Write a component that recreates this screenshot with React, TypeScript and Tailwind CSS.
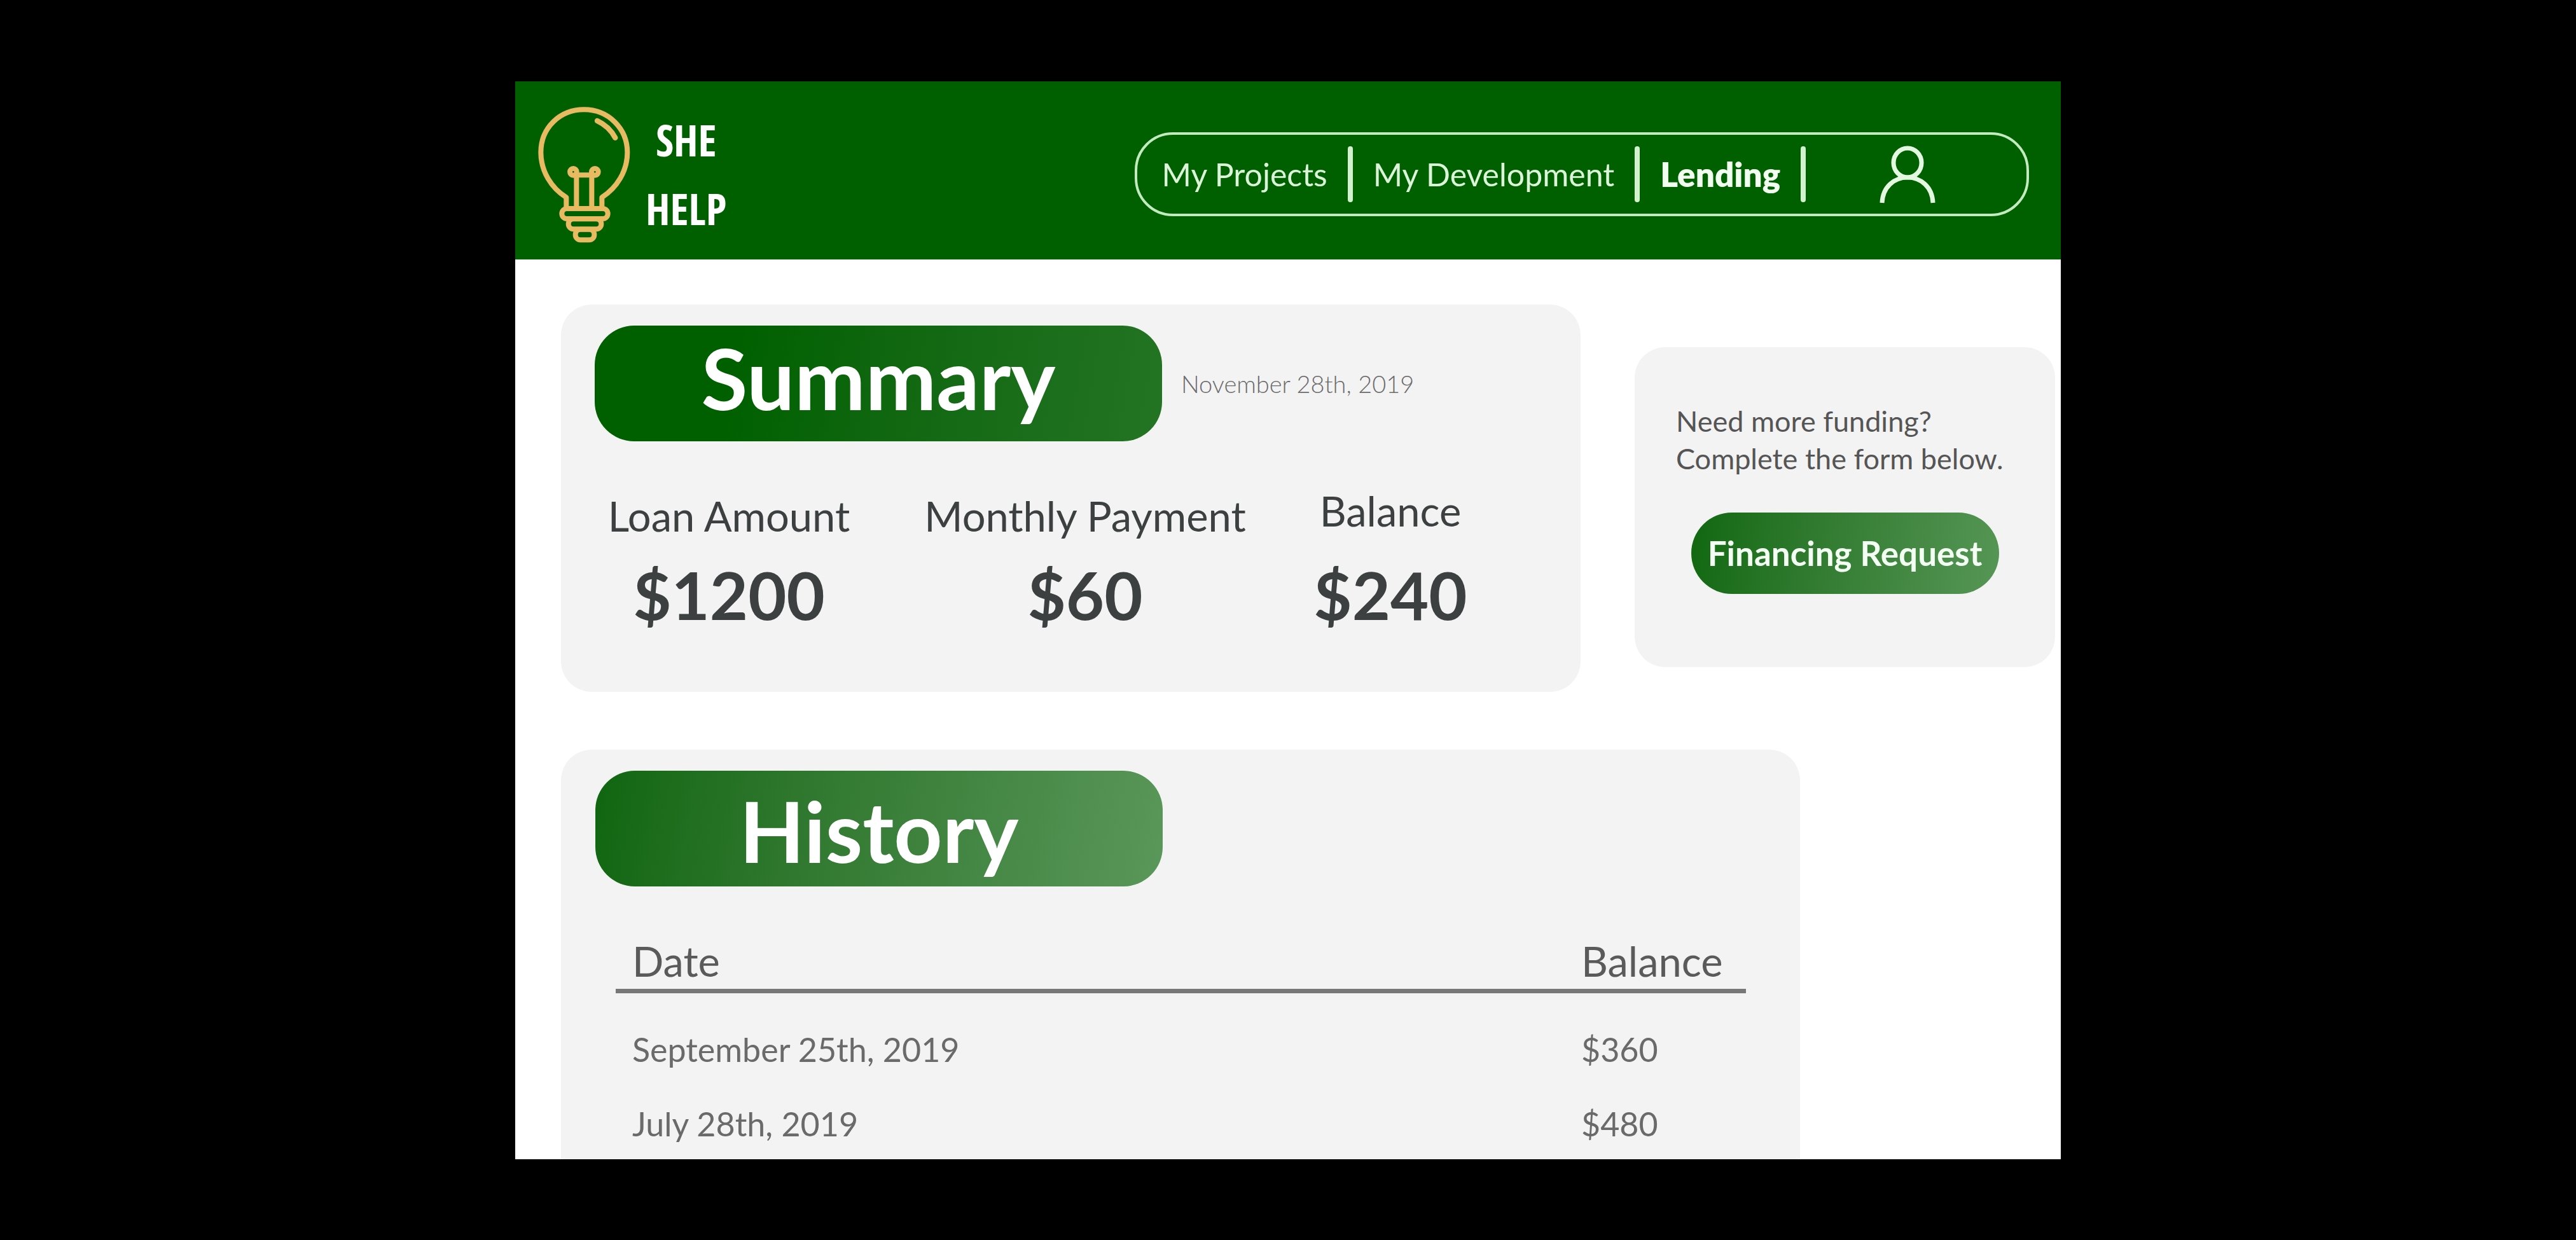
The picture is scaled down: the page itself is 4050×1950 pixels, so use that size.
import React from "react";

const stats = [
  { label: "Loan Amount", value: "$1200", gap: "gap-5" },
  { label: "Monthly Payment", value: "$60", gap: "gap-5" },
  { label: "Balance", value: "$240", gap: "gap-7" },
];

const history = [
  { date: "September 25th, 2019", balance: "$360" },
  { date: "July 28th, 2019", balance: "$480" },
];

function Bulb() {
  return (
    <svg
      viewBox="140 146 435 642"
      className="h-[214px] w-[145px] shrink-0"
      fill="none"
      stroke="#e8ba61"
      strokeWidth="24"
      strokeLinejoin="round"
      aria-hidden="true"
    >
      <path d="M273 622V573C203 530 153 450 153 361C153 244 243 159 357 159C471 159 561 248 561 361C561 450 511 528 441 573V622" />
      <path d="M419 212Q475 238 504 292" strokeLinecap="round" strokeWidth="25" />
      <circle cx="306" cy="453" r="16" />
      <circle cx="408" cy="453" r="16" />
      <path d="M321 622V460M393 622V460M321 468H393" />
      <rect x="252" y="626" width="217" height="48" rx="24" />
      <rect x="283" y="675" width="155" height="48" rx="24" />
      <rect x="316" y="724" width="89" height="50" rx="24" />
    </svg>
  );
}

function Person() {
  return (
    <svg viewBox="0 0 96 92" className="h-[92px] w-[96px]" fill="none" stroke="#e4f7e1" strokeWidth="7" aria-hidden="true">
      <ellipse cx="48" cy="28" rx="22" ry="23" />
      <path d="M8 91C9 66 27 51 48 51C69 51 87 66 88 91" />
    </svg>
  );
}

function Divider() {
  return <span className="h-[88px] w-2 shrink-0 rounded-sm bg-[#d3f0cf]" />;
}

export default function App() {
  return (
    <div className="flex min-h-screen flex-col bg-black pt-32 pb-[127px] font-['Lato',sans-serif]">
      <div className="mx-auto flex w-[60%] flex-1 flex-col overflow-hidden bg-white">
        <header className="flex items-start bg-[#006000] pr-[50px] pl-9">
          <a href="#home" className="flex gap-6 text-white">
            <span className="pt-10">
              <Bulb />
            </span>
            <span className="flex flex-col pt-[38px] pb-[26px] text-center font-['Open_Sans_Condensed','Roboto_Condensed',sans-serif] text-[68px] leading-[108px] font-bold">
              <span>SHE</span>
              <span>HELP</span>
            </span>
          </a>
          <nav className="mt-20 ml-auto flex h-[132px] w-[60%] items-center gap-8 rounded-[60px] border-4 border-[#c4ebc0] pl-[39px] text-[50px] whitespace-nowrap text-[#dcf4d9]">
            <a href="#projects">My Projects</a>
            <Divider />
            <a href="#development">My Development</a>
            <Divider />
            <a href="#lending" aria-current="page" className="text-[53px] font-extrabold text-[#f2fff0]">
              Lending
            </a>
            <Divider />
            <button type="button" aria-label="Account" className="ml-20">
              <Person />
            </button>
          </nav>
        </header>

        <main className="flex flex-1 flex-col pt-[71px] pl-[72px]">
          <div className="flex items-start gap-[85px] pr-[9px]">
            <section className="flex-1 rounded-[48px] bg-[#f3f3f3] pt-[33px] pb-[89px]">
              <div className="flex items-center gap-[30px] pl-[53px]">
                <h1 className="flex h-[182px] w-[892px] items-center justify-center rounded-[62px] bg-linear-100 from-[#006000] from-25% to-[#237423] pb-5 text-[133px] leading-none font-bold text-white">
                  Summary
                </h1>
                <time dateTime="2019-11-28" className="text-[38px] font-light text-[#6b6b6b]">
                  November 28th, 2019
                </time>
              </div>
              <dl className="mt-[69px] grid grid-cols-[520px_600px_360px] items-end pl-1 text-center whitespace-nowrap text-[#3c4040]">
                {stats.map((s) => (
                  <div key={s.label} className={`flex flex-col ${s.gap}`}>
                    <dt className="text-[65px] leading-[80px]">{s.label}</dt>
                    <dd className="text-[104px] leading-[128px] font-bold">{s.value}</dd>
                  </div>
                ))}
              </dl>
            </section>

            <aside className="mt-[67px] w-[661px] rounded-[48px] bg-[#f3f3f3] pt-[87px] pb-[115px]">
              <p className="pl-[65px] text-[45px] leading-[59px] text-[#555555]">
                Need more funding?
                <br />
                Complete the form below.
              </p>
              <button
                type="button"
                className="mx-auto mt-[55px] block h-32 w-[484px] rounded-full bg-linear-100 from-[#0f680f] to-[#569656] text-[53px] font-bold whitespace-nowrap text-[#f4fff4]"
              >
                Financing Request
              </button>
            </aside>
          </div>

          <section className="mt-[91px] mr-[410px] flex-1 rounded-t-[48px] bg-[#f3f3f3] pt-[33px]">
            <h2 className="ml-[54px] flex h-[182px] w-[892px] items-center justify-center rounded-[62px] bg-linear-100 from-[#0f660f] to-[#5a975a] pt-1 text-[133px] leading-none font-bold text-white">
              History
            </h2>
            <div className="mt-[77px] mr-[85px] ml-[86px]">
              <table className="w-full border-collapse text-left">
                <thead className="border-b-7 border-[#777777] text-[65px] leading-[80px] text-[#5a5a5a]">
                  <tr>
                    <th scope="col" className="pb-1 pl-[26px] font-normal">
                      Date
                    </th>
                    <th scope="col" className="w-[259px] pb-1 font-normal">
                      Balance
                    </th>
                  </tr>
                </thead>
                <tbody className="text-[52px] leading-[104px] text-[#6a6a6a] [&>tr:first-child>td]:pt-9">
                  {history.map((row) => (
                    <tr key={row.date}>
                      <td className="pt-[13px] pl-[26px]">{row.date}</td>
                      <td className="pt-[13px]">{row.balance}</td>
                    </tr>
                  ))}
                </tbody>
              </table>
            </div>
          </section>
        </main>
      </div>
    </div>
  );
}
